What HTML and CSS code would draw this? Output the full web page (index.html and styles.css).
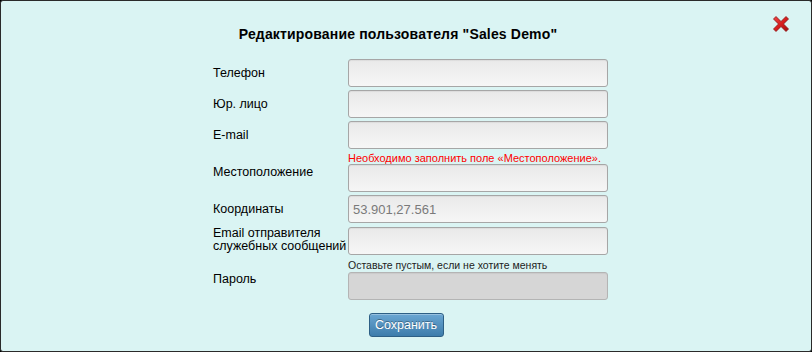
FILE: index.html
```html
<!DOCTYPE html>
<html lang="ru">
<head>
<meta charset="utf-8">
<title>Редактирование пользователя</title>
<link rel="stylesheet" href="styles.css">
</head>
<body>
<div class="dialog">
  <a class="close" href="#" title="Закрыть">
    <svg width="18" height="18" viewBox="0 0 18 18">
      <defs>
        <linearGradient id="xg" x1="0" y1="0" x2="1" y2="1">
          <stop offset="0" stop-color="#f24848"/>
          <stop offset="0.5" stop-color="#d81e1e"/>
          <stop offset="1" stop-color="#9c0c0c"/>
        </linearGradient>
      </defs>
      <path d="M1.5 4 L4 1.5 L9 6.5 L14 1.5 L16.5 4 L11.5 9 L16.5 14 L14 16.5 L9 11.5 L4 16.5 L1.5 14 L6.5 9 Z" fill="url(#xg)" stroke="#8a1010" stroke-width="0.8" stroke-linejoin="round"/>
    </svg>
  </a>
  <h1 class="title">Редактирование пользователя "Sales Demo"</h1>
  <form class="form">
    <div class="grid">
      <label class="lbl">Телефон</label>
      <div class="field"><input class="inp" type="text"></div>

      <label class="lbl">Юр. лицо</label>
      <div class="field"><input class="inp" type="text"></div>

      <label class="lbl">E-mail</label>
      <div class="field"><input class="inp" type="text"></div>

      <label class="lbl">Местоположение</label>
      <div class="field">
        <div class="msg msg-error">Необходимо заполнить поле «Местоположение».</div>
        <input class="inp" type="text">
      </div>

      <label class="lbl">Координаты</label>
      <div class="field"><input class="inp" type="text" value="53.901,27.561"></div>

      <label class="lbl lbl-two">Email отправителя<br>служебных сообщений</label>
      <div class="field"><input class="inp" type="text"></div>

      <label class="lbl">Пароль</label>
      <div class="field">
        <div class="msg msg-hint">Оставьте пустым, если не хотите менять</div>
        <input class="inp inp-disabled" type="password">
      </div>
    </div>
    <div class="actions">
      <button class="btn" type="button">Сохранить</button>
    </div>
  </form>
</div>
</body>
</html>
```
FILE: styles.css
```css
html, body {
  margin: 0;
  padding: 0;
  background: #000;
}
body {
  width: 812px;
  height: 352px;
  font-family: "Liberation Sans", Arial, sans-serif;
}
.dialog {
  position: relative;
  box-sizing: border-box;
  width: 812px;
  height: 352px;
  background: #daf4f3;
  border: 1px solid #2a2a2a;
  border-radius: 3px;
}
.close {
  position: absolute;
  top: 14px;
  right: 21px;
  width: 18px;
  height: 18px;
  display: block;
}
.close svg { display: block; }
.title {
  margin: 0;
  padding: 25px 16px 0 0;
  font-size: 14px;
  line-height: 16px;
  font-weight: bold;
  letter-spacing: 0.17px;
  text-align: center;
  color: #000;
}
.form {
  margin: 0;
  padding: 17px 0 0 212px;
}
.grid {
  display: grid;
  grid-template-columns: 135px 260px;
  row-gap: 3px;
  align-items: center;
}
.lbl {
  font-size: 12.5px;
  line-height: 13px;
  color: #000;
}
.lbl-two {
  white-space: nowrap;
  padding: 1px 0 3px;
}
.field {
  display: flex;
  flex-direction: column;
}
.msg {
  font-size: 11px;
  line-height: 12px;
  height: 12px;
}
.msg-error { color: #f00; }
.msg-hint {
  color: #222;
  font-size: 10.5px;
  height: 13px;
  line-height: 13px;
}
.inp {
  box-sizing: border-box;
  width: 260px;
  height: 28px;
  margin: 0;
  padding: 0 4px;
  border: 1px solid #a6a6a6;
  border-radius: 3px;
  background: linear-gradient(#e9e9e9, #f6f6f6);
  box-shadow: inset 0 1px 1px rgba(0,0,0,0.06);
  font-family: "Liberation Sans", Arial, sans-serif;
  font-size: 13px;
  color: #7a7a7a;
  outline: none;
}
.inp-disabled {
  background: #d6d6d6;
  border-color: #b4b4b4;
}
.actions {
  display: flex;
  justify-content: center;
  padding: 13px 0 0 0;
  margin-left: -212px;
}
.btn {
  box-sizing: border-box;
  width: 75px;
  height: 24px;
  padding: 0;
  border: 1px solid #2d5f85;
  border-radius: 3px;
  background: linear-gradient(#6aa6d2, #3d7cab);
  color: #fff;
  font-family: "Liberation Sans", Arial, sans-serif;
  font-size: 12.5px;
  text-shadow: 0 -1px 0 rgba(0,0,0,0.35);
  box-shadow: inset 0 1px 0 rgba(255,255,255,0.3);
  cursor: pointer;
}
```
